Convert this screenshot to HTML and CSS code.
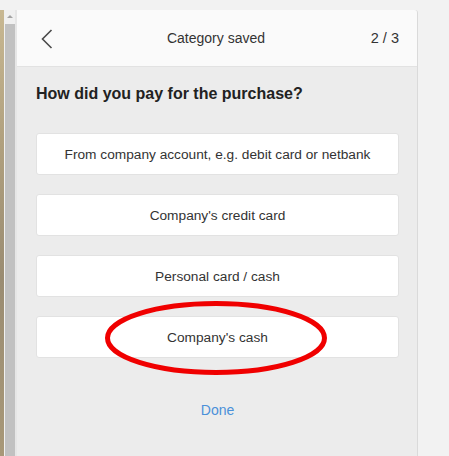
FILE: index.html
```html
<!DOCTYPE html>
<html>
<head>
<meta charset="utf-8">
<link rel="stylesheet" href="styles.css">
</head>
<body>
<div class="page">
  <div class="photo"></div>
  <div class="scrollbar">
    <div class="arrow"></div>
    <div class="thumb"></div>
  </div>
  <div class="gutter"></div>
  <div class="panel">
    <div class="header">
      <div class="back">
        <svg width="12" height="20" viewBox="0 0 12 20"><path d="M10.5 1 L1.5 10 L10.5 19" fill="none" stroke="#4a4a4a" stroke-width="1.6"/></svg>
      </div>
      <div class="title">Category saved</div>
      <div class="count">2 / 3</div>
    </div>
    <div class="content">
      <h2 class="question">How did you pay for the purchase?</h2>
      <div class="options">
        <div class="option">From company account, e.g. debit card or netbank</div>
        <div class="option">Company's credit card</div>
        <div class="option">Personal card / cash</div>
        <div class="option">Company's cash</div>
      </div>
      <div class="done">Done</div>
    </div>
  </div>
  <div class="right"></div>
</div>
<svg class="mark" width="232" height="80" viewBox="0 0 232 80"><ellipse cx="116" cy="40" rx="108.5" ry="34.5" fill="none" stroke="#f00000" stroke-width="5"/></svg>
</body>
</html>
```
FILE: styles.css
```css
html, body {
  margin: 0;
  padding: 0;
  background: #f2f2f2;
  font-family: "Liberation Sans", Arial, sans-serif;
}
.page {
  display: flex;
  padding-top: 10px;
  height: 446px;
  overflow: hidden;
}
.photo {
  width: 4px;
  background: linear-gradient(180deg, #c8b892 0%, #b0a07e 30%, #9a8c72 60%, #a89878 100%);
}
.scrollbar {
  width: 11px;
  background: #f0f0f0;
  display: flex;
  flex-direction: column;
  align-items: center;
}
.arrow {
  margin-top: 5px;
  width: 0;
  height: 0;
  border-left: 3.5px solid transparent;
  border-right: 3.5px solid transparent;
  border-bottom: 3px solid #a3a3a3;
}
.thumb {
  margin-top: 6px;
  width: 10px;
  flex: 1;
  background: #c1c1c1;
}
.gutter {
  width: 2px;
  background: #e6e6e6;
}
.panel {
  width: 400px;
  background: #ececec;
  border-right: 1px solid #dadada;
  border-top-right-radius: 3px;
  display: flex;
  flex-direction: column;
}
.header {
  height: 56px;
  background: #fafafa;
  border-bottom: 1px solid #e2e2e2;
  border-top-right-radius: 3px;
  display: flex;
  align-items: center;
  padding: 0 18px 0 24px;
  color: #333;
  font-size: 14px;
}
.back {
  width: 40px;
  display: flex;
  align-items: center;
  padding-top: 1px;
}
.title {
  flex: 1;
  text-align: center;
}
.count {
  width: 48px;
  text-align: right;
  font-size: 14.5px;
}
.content {
  padding: 17px 18px 0 19px;
}
.question {
  margin: 0;
  font-size: 16px;
  line-height: 19px;
  font-weight: bold;
  color: #222;
}
.options {
  margin-top: 30px;
  display: flex;
  flex-direction: column;
  gap: 19px;
}
.option {
  height: 40px;
  background: #fff;
  border: 1px solid #e2e2e2;
  border-radius: 3px;
  display: flex;
  align-items: center;
  justify-content: center;
  font-size: 13.7px;
  color: #333;
}
.done {
  margin-top: 44px;
  text-align: center;
  color: #4a90d9;
  font-size: 14px;
  line-height: 17px;
}
.mark {
  position: absolute;
  left: 100px;
  top: 298px;
}
```
